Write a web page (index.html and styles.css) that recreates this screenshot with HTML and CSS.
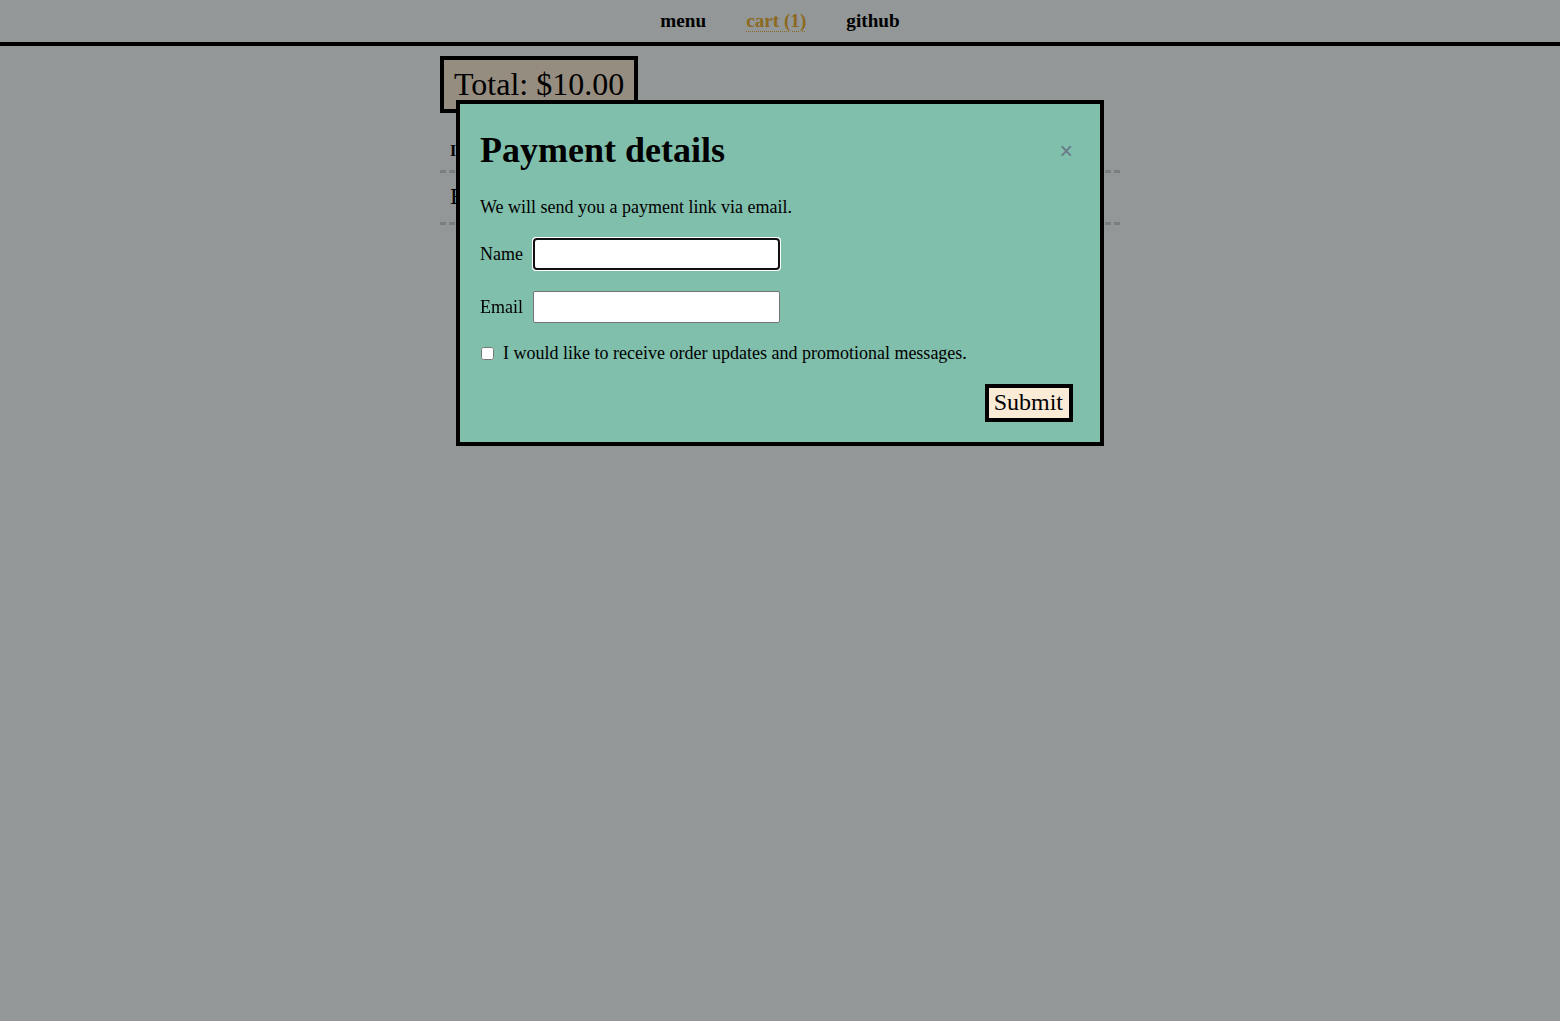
FILE: index.html
```html
<!DOCTYPE html>
<html lang="en">
<head>
<meta charset="utf-8">
<title>Cart</title>
<link rel="stylesheet" href="styles.css">
</head>
<body>
<nav class="topnav">
  <a class="navlink" href="#">menu</a>
  <a class="navlink navlink-active" href="#">cart (1)</a>
  <a class="navlink" href="#">github</a>
</nav>
<main class="cart">
  <div class="total">Total: $10.00</div>
  <table class="items">
    <thead>
      <tr><th>Item</th><th>Qty</th><th>Price</th></tr>
    </thead>
    <tbody>
      <tr><td>Ebook</td><td>1</td><td>$10.00</td></tr>
    </tbody>
  </table>
</main>
<div class="backdrop"></div>
<div class="modal" role="dialog" aria-labelledby="pay-title">
  <div class="modal-head">
    <h2 id="pay-title" class="modal-title">Payment details</h2>
    <button class="close" type="button" aria-label="Close">×</button>
  </div>
  <p class="modal-text">We will send you a payment link via email.</p>
  <form class="pay-form">
    <div class="field">
      <label for="name">Name</label>
      <input id="name" class="text-input" type="text" autofocus>
    </div>
    <div class="field">
      <label for="email">Email</label>
      <input id="email" class="text-input" type="email">
    </div>
    <label class="check">
      <input type="checkbox" class="check-box">
      <span>I would like to receive order updates and promotional messages.</span>
    </label>
    <div class="actions">
      <button class="submit" type="submit">Submit</button>
    </div>
  </form>
</div>
</body>
</html>
```
FILE: styles.css
```css
html, body {
  margin: 0;
  padding: 0;
}
body {
  background: #f5fcfc;
  font-family: "Liberation Serif", "Times New Roman", serif;
  color: #000;
  min-height: 100vh;
}
.topnav {
  height: 42px;
  border-bottom: 4px solid #000;
  display: flex;
  align-items: center;
  justify-content: center;
  gap: 40px;
}
.navlink {
  color: #000;
  font-weight: bold;
  font-size: 19.2px;
  text-decoration: none;
}
.navlink-active {
  color: #e9b034;
  text-decoration: underline dotted;
  text-underline-offset: 4px;
  text-decoration-thickness: 1px;
}
.cart {
  width: 680px;
  margin: 10px auto 0;
}
.total {
  width: fit-content;
  border: 4px solid #000;
  background: #faebd7;
  font-size: 32px;
  padding: 6px 10px;
}
.items {
  width: 100%;
  border-collapse: collapse;
  margin-top: 19px;
}
.items th {
  text-align: left;
  font-size: 16px;
  padding: 10px;
  border-bottom: 3px dashed #cdd3d3;
}
.items td {
  font-size: 24px;
  padding: 10px 10px 12px;
  border-bottom: 3px dashed #cdd3d3;
}
.backdrop {
  position: fixed;
  inset: 0;
  background: rgba(0, 0, 0, 0.4);
}
.modal {
  position: fixed;
  top: 100px;
  left: 50%;
  transform: translateX(-50%);
  width: 648px;
  box-sizing: border-box;
  border: 4px solid #000;
  background: #80bfac;
  padding: 25px 27px 20px 20px;
}
.modal-head {
  display: flex;
  align-items: center;
  justify-content: space-between;
}
.modal-title {
  margin: 0;
  font-size: 36px;
  font-weight: bold;
}
.close {
  background: none;
  border: none;
  padding: 0;
  font-family: "Liberation Sans", Arial, sans-serif;
  font-size: 23px;
  color: #6a7888;
  cursor: pointer;
  margin-top: 3px;
}
.modal-text {
  margin: 26px 0 0;
  font-size: 18px;
}
.pay-form {
  margin-top: 20px;
  display: flex;
  flex-direction: column;
}
.field {
  display: flex;
  align-items: center;
  gap: 10px;
  font-size: 18px;
  margin-bottom: 21px;
}
.text-input {
  box-sizing: border-box;
  width: 247px;
  height: 32px;
  border: 1px solid #767676;
  border-radius: 2px;
  background: #fff;
  font-family: "Liberation Serif", "Times New Roman", serif;
  font-size: 18px;
  padding: 0 10px;
}
.check {
  display: flex;
  align-items: center;
  font-size: 18px;
  margin-top: -1px;
}
.check-box {
  width: 13px;
  height: 13px;
  margin: 0 9px 0 1px;
}
.actions {
  display: flex;
  justify-content: flex-end;
  margin-top: 20px;
}
.submit {
  border: 4px solid #000;
  background: #faebd7;
  font-family: "Liberation Serif", "Times New Roman", serif;
  font-size: 24px;
  padding: 1px 6px 2px 5px;
  color: #000;
  cursor: pointer;
}
```
